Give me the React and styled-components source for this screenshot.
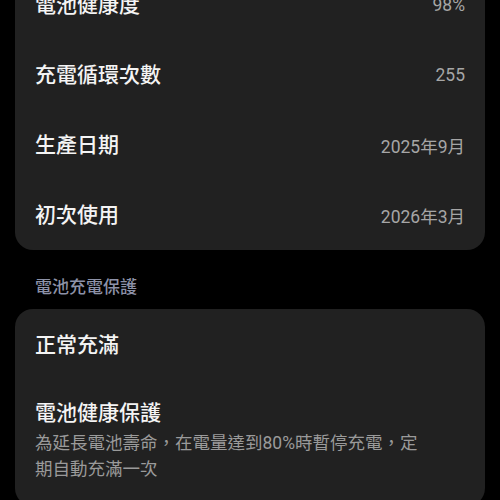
import React from "react"
import styled, { createGlobalStyle } from "styled-components"

const GlobalStyle = createGlobalStyle`
  html, body {
    margin: 0;
    padding: 0;
    background: #000;
  }
  body {
    font-family: "Roboto", "Noto Sans CJK TC", sans-serif;
    overflow: hidden;
  }
`

const Page = styled.div`
  width: 500px;
  height: 500px;
  overflow: hidden;
  background: #000;
`

const Scroller = styled.div`
  margin-top: -30px;
  padding: 0 15px;
`

const Card = styled.div`
  background: #212121;
  border-radius: 18px;
  padding: 0 20px;
`

const Row = styled.div`
  height: ${(p) => p.height || 70}px;
  display: flex;
  align-items: center;
  justify-content: space-between;
`

const Label = styled.div`
  font-size: 21px;
  font-weight: 500;
  color: #f4f4f4;
  line-height: 28px;
`

const Value = styled.div`
  font-size: 17.5px;
  color: #a6a6a6;
`

const SectionTitle = styled.div`
  font-size: 17px;
  font-weight: 500;
  line-height: 24px;
  color: #8d92a8;
  padding: 25px 20px 10px;
`

const OptionBlock = styled.div`
  padding: 18px 0 24px;
`

const Sub = styled.div`
  font-size: 17.5px;
  line-height: 26px;
  color: #9a9a9a;
  margin-top: 3px;
  max-width: 392px;
`

const info = [
  ["電池健康度", "98%"],
  ["充電循環次數", "255"],
  ["生產日期", "2025年9月"],
  ["初次使用", "2026年3月"],
]

export default function App() {
  return (
    <Page>
      <GlobalStyle />
      <Scroller>
        <Card>
          {info.map(([k, v]) => (
            <Row key={k}>
              <Label>{k}</Label>
              <Value>{v}</Value>
            </Row>
          ))}
        </Card>
        <SectionTitle>電池充電保護</SectionTitle>
        <Card>
          <Row height={72}>
            <Label>正常充滿</Label>
          </Row>
          <OptionBlock>
            <Label>電池健康保護</Label>
            <Sub>為延長電池壽命，在電量達到80%時暫停充電，定期自動充滿一次</Sub>
          </OptionBlock>
        </Card>
      </Scroller>
    </Page>
  )
}
